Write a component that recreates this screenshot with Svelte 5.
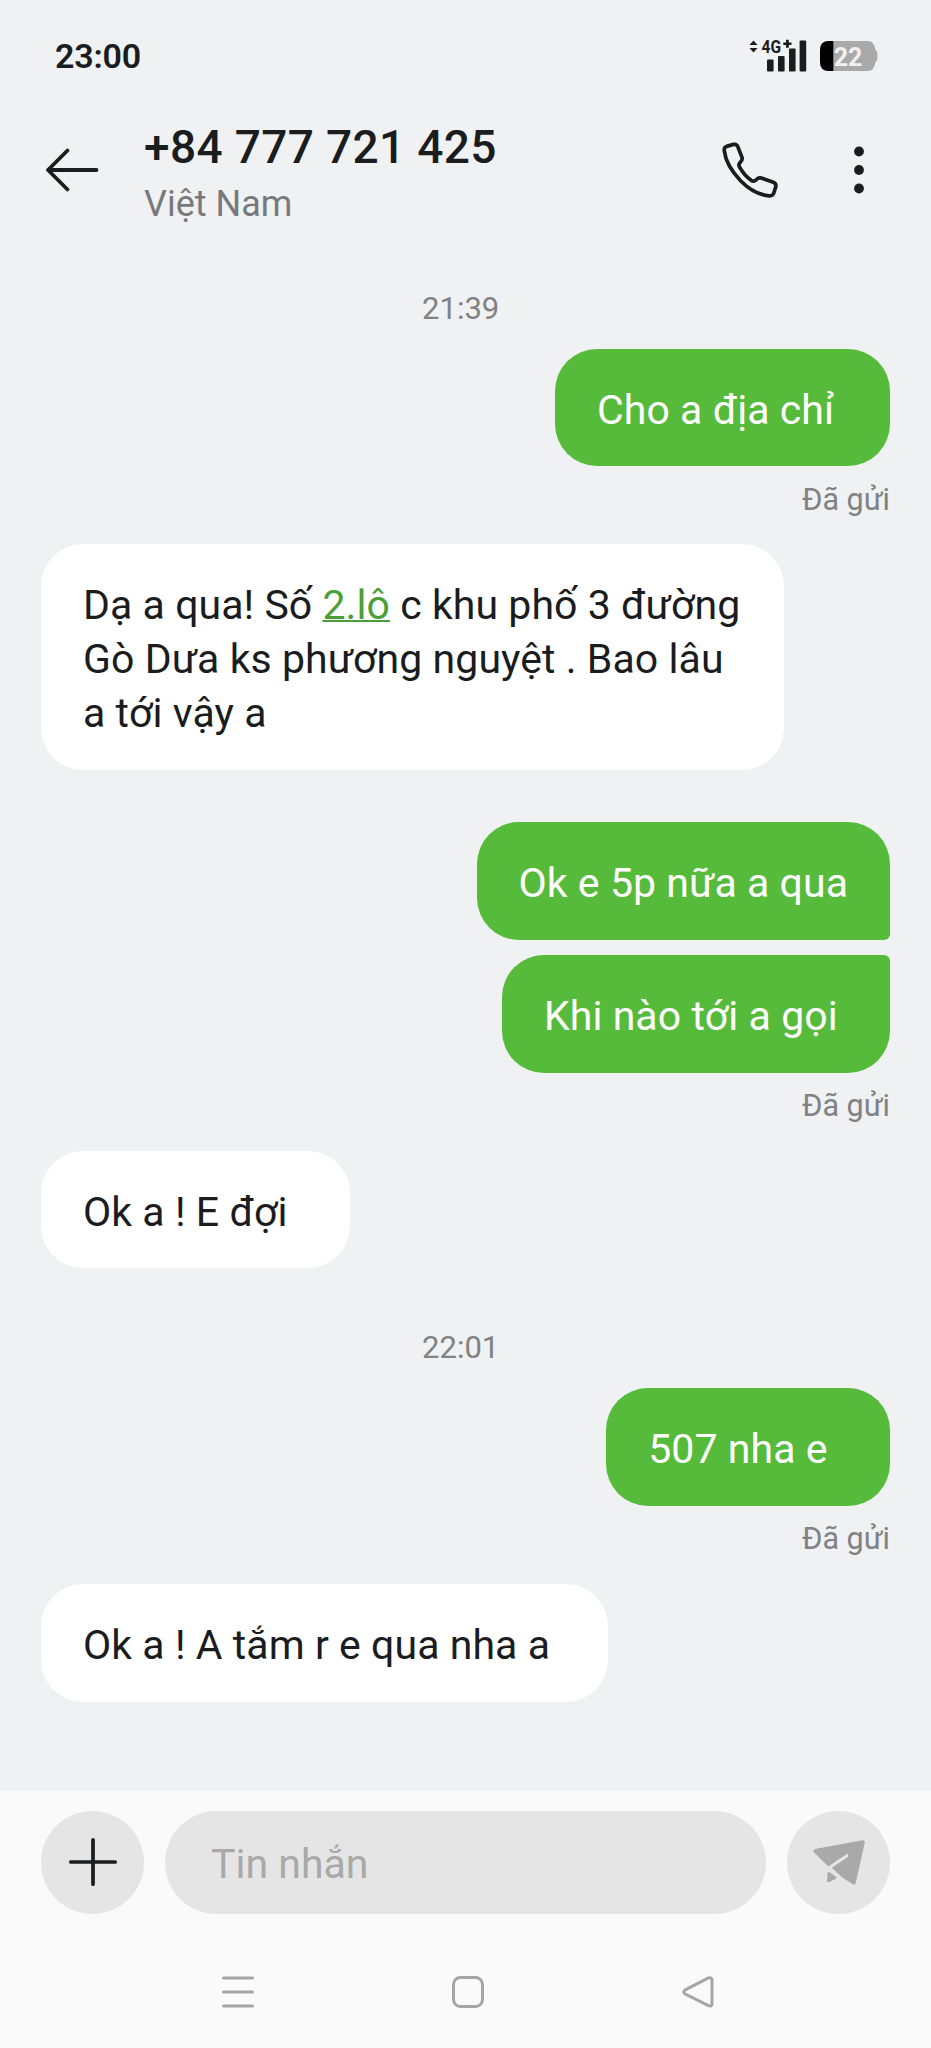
<script>
  const contact = { number: '+84 777 721 425', region: 'Việt Nam' };

  // Trailing spaces are part of the messages and widen their bubbles
  const messages = [
    { kind: 'time', text: '21:39 ' },
    { kind: 'out', text: 'Cho a địa chỉ ', width: 335 },
    { kind: 'status', text: 'Đã gửi' },
    { kind: 'in', text: 'Dạ a qua! Số ', link: '2.lô', rest: ' c khu phố 3 đường Gò Dưa ks phương nguyệt . Bao lâu a tới vậy a' },
    { kind: 'out', text: 'Ok e 5p nữa a qua', group: 'first' },
    { kind: 'out', text: 'Khi nào tới a gọi ', group: 'last' },
    { kind: 'status', text: 'Đã gửi' },
    { kind: 'in', text: 'Ok a ! E đợi  ' },
    { kind: 'time', text: '22:01 ' },
    { kind: 'out', text: '507 nha e  ' },
    { kind: 'status', text: 'Đã gửi' },
    { kind: 'in', text: 'Ok a ! A tắm r e qua nha a ', width: 567 }
  ];

  let draft = '';
</script>

<div class="screen">
  <div class="status-bar">
    <span class="clock">23:00</span>
    <div class="indicators">
      <svg class="signal" width="58" height="34" viewBox="0 0 58 34" fill="#1b1c1e">
        <path d="M4.5 1.5 L8.6 6 H0.4 Z M4.5 13.5 L8.6 9 H0.4 Z" />
        <text x="12.5" y="14" font-size="17.5" font-weight="700" textLength="19.5" lengthAdjust="spacingAndGlyphs">4G</text>
        <path d="M37 0.8 h2.8 v2.7 h2.7 v2.6 h-2.7 v2.7 h-2.8 v-2.7 h-2.7 v-2.6 h2.7 Z" />
        <rect x="18" y="20.5" width="6.6" height="12" rx="1" />
        <rect x="29" y="17" width="6.6" height="15.5" rx="1" />
        <rect x="40" y="9.5" width="6.6" height="23" rx="1" />
        <rect x="50.6" y="1.5" width="6.6" height="31" rx="1" />
      </svg>
      <svg class="battery" width="58" height="30" viewBox="0 0 58 30">
        <path d="M9 0 H48 Q54 0 55.5 9 Q57.5 10 57.5 15 Q57.5 20 55.5 21 Q54 30 48 30 H9 Q0 30 0 21 V9 Q0 0 9 0 Z" fill="#a9a9a9" />
        <path d="M9 0 H13.3 V30 H9 Q0 30 0 21 V9 Q0 0 9 0 Z" fill="#000" />
        <text x="13.8" y="25" font-size="25" font-weight="700" fill="#f1f1f1" textLength="28.5">22</text>
      </svg>
    </div>
  </div>

  <header class="header">
    <button class="icon-button" aria-label="Quay lại">
      <svg width="54" height="46" viewBox="0 0 54 46" fill="none" stroke="#1b1c1e" stroke-width="3.8" stroke-linecap="round" stroke-linejoin="round">
        <path d="M51.5 23 H3 M22.5 3.5 L3 23 L22.5 42.5" />
      </svg>
    </button>
    <div class="contact">
      <h1>{contact.number}</h1>
      <p>{contact.region}</p>
    </div>
    <button class="icon-button call" aria-label="Gọi">
      <svg width="56" height="56" viewBox="0 0 56 56" fill="none" stroke="#1b1c1e" stroke-width="3.7" stroke-linejoin="round">
        <path d="M4.6 4.4 L11.5 2.4 Q14.6 1.7 15.8 4.6 L19.9 15.2 Q20.8 17.8 18.6 19.8 Q16 22.2 17.6 25.2 Q22.5 34 29.6 38.6 Q32 40 34.4 37.6 Q36.6 35.1 39.4 36.1 L51.3 40.2 Q54.4 41.5 53.8 44.6 L51.8 51 Q50.8 54 47.4 53.8 Q32.5 52.8 18.8 39 Q4 23.6 2.3 8.8 Q1.8 5.3 4.6 4.4 Z" />
      </svg>
    </button>
    <button class="icon-button more" aria-label="Thêm">
      <svg width="12" height="48" viewBox="0 0 12 48" fill="#1b1c1e">
        <circle cx="6" cy="5.5" r="4.9" />
        <circle cx="6" cy="24" r="4.9" />
        <circle cx="6" cy="42.5" r="4.9" />
      </svg>
    </button>
  </header>

  <main class="thread">
    {#each messages as msg}
      {#if msg.kind === 'time'}
        <time>{msg.text}</time>
      {:else if msg.kind === 'status'}
        <span class="sent">{msg.text}</span>
      {:else}
        <div class="bubble {msg.kind} {msg.group ?? ''}" style:width={msg.width ? `${msg.width}px` : null}>{msg.text}{#if msg.link}<a href="#link">{msg.link}</a>{msg.rest}{/if}</div>
      {/if}
    {/each}
  </main>

  <footer class="bottom">
    <div class="composer">
      <button class="round" aria-label="Đính kèm">
        <svg width="50" height="50" viewBox="0 0 50 50" stroke="#1b1c1e" stroke-width="3.7" stroke-linecap="round">
          <path d="M25 2.8 V47.2 M2.8 25 H47.2" />
        </svg>
      </button>
      <input type="text" placeholder="Tin nhắn" bind:value={draft} />
      <button class="round send" aria-label="Gửi">
        <svg width="54" height="46" viewBox="0 0 54 46" fill="#a9a9a9" stroke="#a9a9a9" stroke-linejoin="round">
          <path d="M3.4 12 L50.8 3.3 L41.8 43.5 L20.5 29.6 L17 25.3 Z" stroke-width="4" />
          <path d="M16.8 34.3 L23.3 38.7 L16.3 42 Z" stroke-width="2.5" />
          <path d="M36 16 L17.2 28.8 L29 39.5" stroke="#e5e5e5" stroke-width="3.2" fill="none" stroke-linecap="butt" />
        </svg>
      </button>
    </div>
    <nav class="system-nav">
      <svg width="32" height="32" viewBox="0 0 32 32"><path d="M1.5 2 H30.5 M1.5 16 H30.5 M1.5 30 H30.5" /></svg>
      <svg width="32" height="32" viewBox="0 0 32 32"><rect x="1.5" y="1.5" width="29" height="29" rx="7" /></svg>
      <svg width="32" height="32" viewBox="0 0 32 32"><path d="M2.8 14.2 L26.4 1.9 Q30 0.8 30 4.2 V27.4 Q30 31 26.4 29.7 L2.8 17.8 Q0.6 16 2.8 14.2 Z" /></svg>
    </nav>
  </footer>
</div>

<style>
  :global(body) { margin: 0; background: #eff1f3; }
  .screen { width: 931px; height: 2048px; display: flex; flex-direction: column; background: #eff1f3; font-family: Roboto, "Noto Sans", sans-serif; color: #1b1c1e; overflow: hidden; }
  button { padding: 0; border: none; background: none; cursor: pointer; }
  svg { display: block; overflow: visible; }

  .status-bar { box-sizing: border-box; height: 112px; padding: 0 53px 0 55px; display: flex; justify-content: space-between; align-items: center; }
  .clock { font-size: 34px; font-weight: 600; letter-spacing: -0.2px; }
  .indicators { display: flex; align-items: center; gap: 13px; }

  .header { box-sizing: border-box; height: 116px; padding: 0 66px 0 45px; display: flex; align-items: center; }
  .contact { flex: 1; margin-left: 45px; padding-top: 5px; }
  h1 { margin: 0; font-size: 46px; font-weight: 500; line-height: 62px; letter-spacing: 0.35px; }
  p { margin: 0; font-size: 36px; line-height: 52px; color: #77797b; }
  .call { margin-right: 75px; }

  .thread { flex: 1; padding: 63px 41px 0; display: flex; flex-direction: column; }
  time { align-self: center; height: 36px; margin: 0 2px 21.5px 0; font-size: 31px; line-height: 36px; color: #808284; white-space: pre; }
  .bubble { box-sizing: border-box; max-width: 743px; padding: 34px 42px 29.8px; border-radius: 42px; font-size: 41px; line-height: 54px; letter-spacing: 0.06px; white-space: pre-wrap; }
  .in { align-self: flex-start; background: #fff; }
  .out { align-self: flex-end; background: #56bb3a; color: #fff; }
  .first { border-bottom-right-radius: 6px; }
  .last { margin-top: 15px; border-top-right-radius: 6px; }
  .in + .out { margin-top: 52px; }
  .in + time { margin-top: 62px; }
  .sent { align-self: flex-end; margin: 15.5px 0 26.5px; font-size: 30.5px; line-height: 36px; color: #808284; }
  a { color: #4a9f38; text-decoration: underline; text-decoration-thickness: 2px; }

  .bottom { box-sizing: border-box; height: 257.5px; padding-top: 20px; background: #fafafa; }
  .composer { display: flex; gap: 21px; padding: 0 41px; }
  .round { flex: none; width: 103px; height: 103px; border-radius: 50%; background: #e5e5e5; display: flex; align-items: center; justify-content: center; }
  input { flex: 1; min-width: 0; height: 103px; box-sizing: border-box; padding: 3px 46px 0; border: none; border-radius: 52px; background: #e5e5e5; font-family: inherit; font-size: 41px; color: #1b1c1e; outline: none; }
  input::placeholder { color: #a9a9a9; opacity: 1; }
  .system-nav { display: flex; justify-content: space-between; padding: 62px 217px 0 222px; }
  .system-nav svg { fill: none; stroke: #a5a5a5; stroke-width: 3; stroke-linecap: round; }
</style>
